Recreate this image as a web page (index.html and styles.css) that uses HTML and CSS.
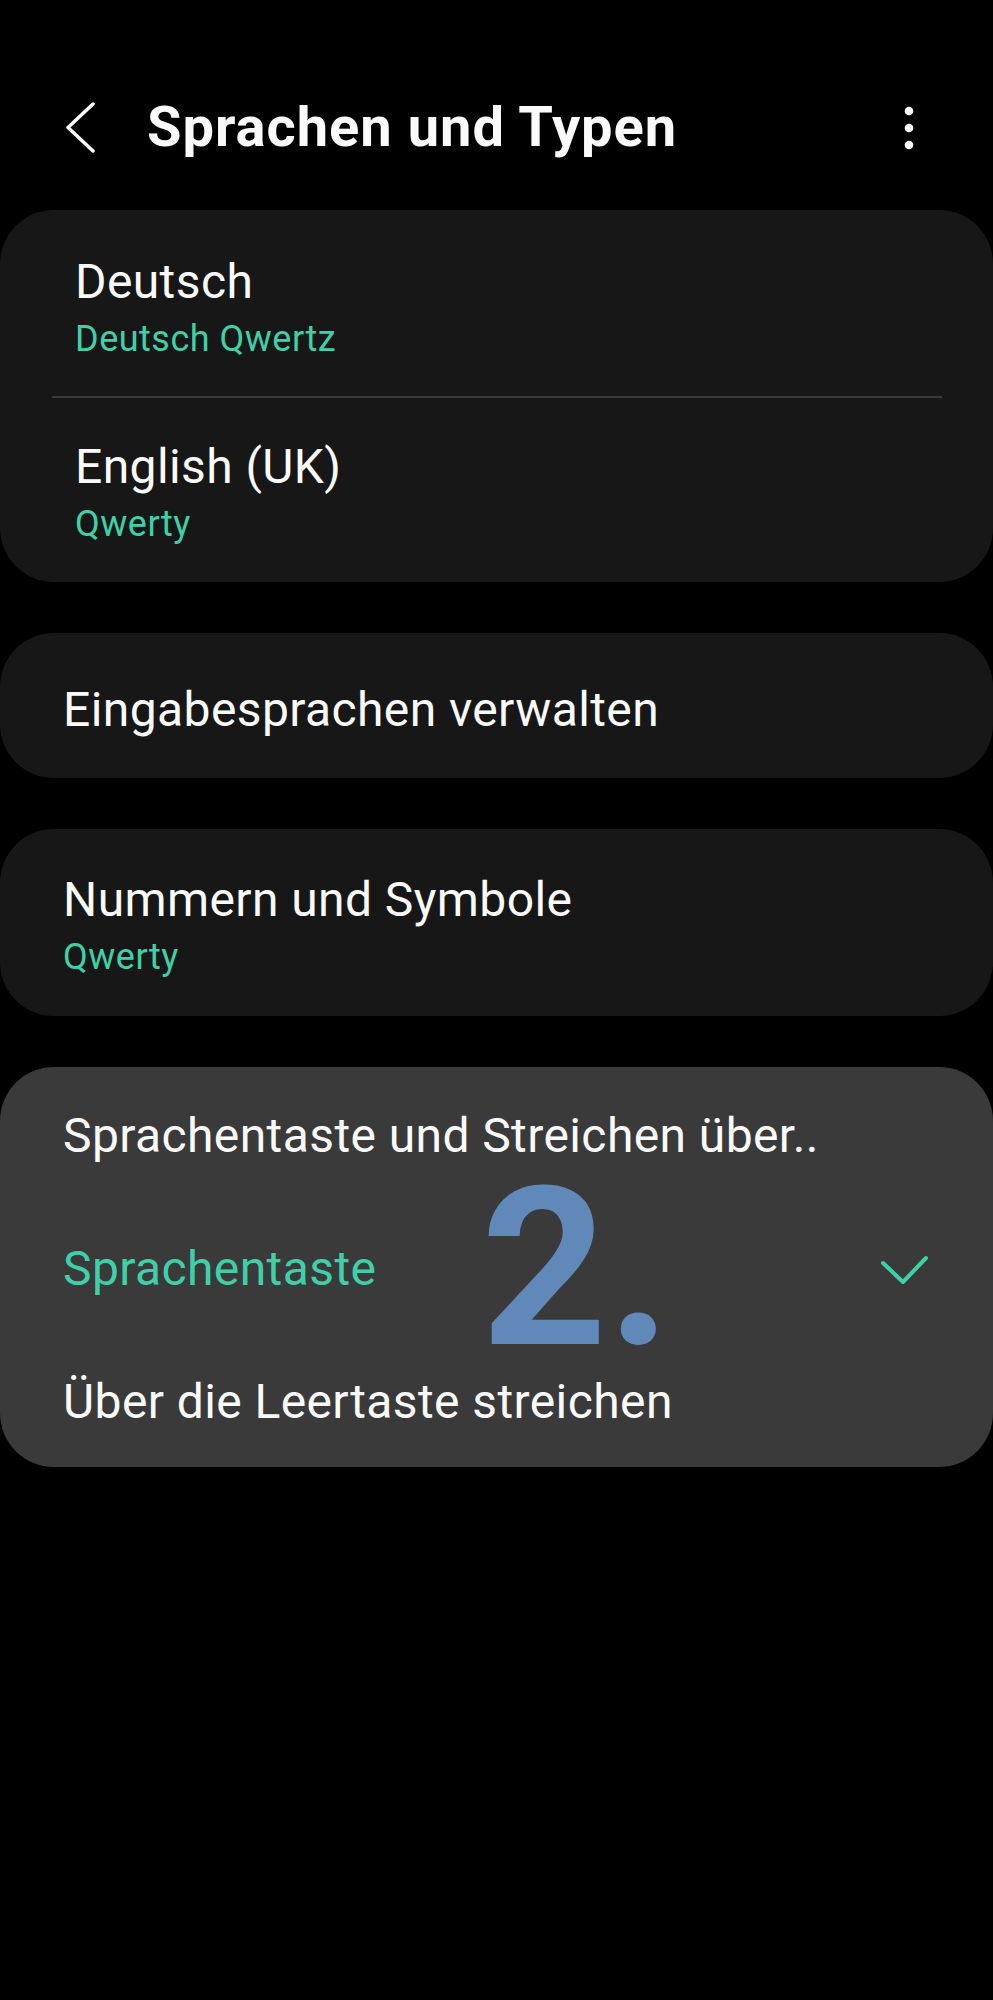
FILE: index.html
```html
<!DOCTYPE html>
<html lang="de">
<head>
<meta charset="UTF-8" />
<meta name="viewport" content="width=device-width, initial-scale=1" />
<title>Sprachen und Typen</title>
<link rel="stylesheet" href="styles.css">
</head>
<body>
  <header class="header">
    <svg class="back" width="30" height="52" viewBox="0 0 30 52">
      <polyline points="27,2 2,25.5 27,49" />
    </svg>
    <h1 class="title">Sprachen und Typen</h1>
    <svg class="more" width="12" height="48" viewBox="0 0 12 48">
      <circle cx="6" cy="7" r="4.3" />
      <circle cx="6" cy="24" r="4.3" />
      <circle cx="6" cy="41" r="4.3" />
    </svg>
  </header>

  <!-- Sprachen -->
  <section class="card langs">
    <div class="lang first">
      <div class="label">Deutsch</div>
      <div class="sub">Deutsch Qwertz</div>
    </div>
    <div class="divider"></div>
    <div class="lang second">
      <div class="label">English (UK)</div>
      <div class="sub">Qwerty</div>
    </div>
  </section>

  <section class="card single">
    <div class="label">Eingabesprachen verwalten</div>
  </section>

  <section class="card numbers">
    <div class="label">Nummern und Symbole</div>
    <div class="sub">Qwerty</div>
  </section>

  <!-- Auswahl -->
  <section class="card popup">
    <div class="label">Sprachentaste und Streichen über..</div>
    <div class="option selected">
      <span class="label">Sprachentaste</span>
      <svg class="check" width="54" height="36" viewBox="0 0 54 36">
        <polyline points="5,12 25,31 48,7" />
      </svg>
    </div>
    <div class="option">
      <span class="label">Über die Leertaste streichen</span>
    </div>
    <div class="step">2.</div>
  </section>
</body>
</html>
```

FILE: styles.css
```css
:root {
  --teal: #3fd0aa;
  --texto: #fafafa;
  --card: #171717;
  --card-claro: #3a3a3a;
}
body {
  margin: 0;
  background-color: #000;
  font-family: Roboto, "Noto Sans", sans-serif;
  color: var(--texto);
}
.header {
  height: 210px;
  box-sizing: border-box;
  padding: 46px 78px 0 66px;
  display: flex;
  align-items: center;
}
.back polyline {
  fill: none;
  stroke: #fff;
  stroke-width: 3.5;
  stroke-linecap: round;
  stroke-linejoin: round;
}
.title {
  margin: 0 0 0 51px;
  flex: 1;
  font-size: 56px;
  font-weight: 700;
  letter-spacing: 1px;
  line-height: 1.2;
}
.more circle {
  fill: #fff;
}
.card {
  background-color: var(--card);
  border-radius: 54px;
  margin-bottom: 51px;
  padding: 0 63px;
}
.label {
  font-size: 48px;
  letter-spacing: 0.4px;
  line-height: 55px;
}
.sub {
  font-size: 36px;
  letter-spacing: 0.5px;
  line-height: 40px;
  color: var(--teal);
  margin-top: 10px;
}
.card.langs {
  padding: 0;
}
.lang {
  padding: 0 75px;
}
.lang.first {
  padding-top: 44px;
  padding-bottom: 37px;
}
.lang.second {
  padding-top: 41px;
  padding-bottom: 38px;
}
.divider {
  height: 2px;
  margin: 0 51px 0 52px;
  background-color: #3a3a3a;
}
.card.single {
  padding-top: 49px;
  padding-bottom: 41px;
}
.card.numbers {
  padding-top: 43px;
  padding-bottom: 39px;
}
.card.popup {
  position: relative;
  background-color: var(--card-claro);
  padding: 41px 61px 38px 63px;
}
.option {
  display: flex;
  align-items: center;
  justify-content: space-between;
  margin-top: 78px;
}
.option.selected .label {
  color: var(--teal);
}
.check polyline {
  fill: none;
  stroke: var(--teal);
  stroke-width: 4;
  stroke-linecap: round;
  stroke-linejoin: round;
}
.step {
  position: absolute;
  left: 481px;
  top: 92px;
  font-size: 220px;
  font-weight: 700;
  line-height: 1;
  color: #6089ba;
}
```
